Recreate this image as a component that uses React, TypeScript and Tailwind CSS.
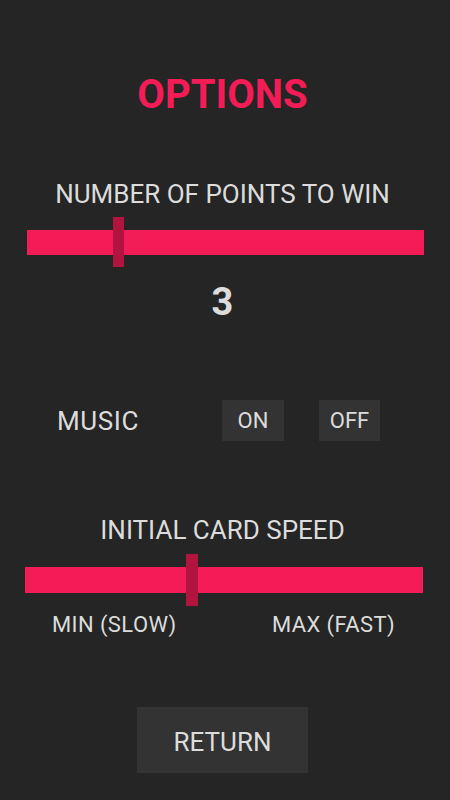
const Slider = ({ left, width, thumb }: { left: number; width: number; thumb: number }) => {
  return (
    <div className="relative h-[50px]" style={{ marginLeft: left, width }}>
      <div className="absolute left-0 right-0 top-[13px] h-[25px] bg-[#f41c57]" />
      <div className="absolute top-0 h-[50px] w-[11px] bg-[#b0143f]" style={{ left: thumb }} />
    </div>
  );
};

export default function App() {
  return (
    <div
      className="w-[450px] h-[800px] bg-[#252525] text-[#dcdcdc] flex flex-col overflow-hidden"
      style={{ fontFamily: "Roboto, 'Liberation Sans', sans-serif" }}
    >
      {/* title */}
      <h1 className="mt-[75px] w-[445px] text-center text-[40px] leading-none font-bold text-[#f41c57]">
        OPTIONS
      </h1>

      {/* points to win */}
      <p className="mt-[66px] w-[445px] text-center text-[26px] leading-none">NUMBER OF POINTS TO WIN</p>
      <div className="mt-[10px]">
        <Slider left={27} width={397} thumb={86} />
      </div>
      <p className="mt-[16px] w-[445px] text-center text-[38px] leading-none font-bold">3</p>

      {/* music */}
      <div className="mt-[79px] flex items-center h-[41px]">
        <span className="ml-[57px] w-[165px] text-[26px] leading-none tracking-[0.6px]">MUSIC</span>
        <button className="w-[62px] h-[41px] bg-[#333333] text-[22px] leading-none">ON</button>
        <button className="ml-[35px] w-[61px] h-[41px] bg-[#333333] text-[22px] leading-none">OFF</button>
      </div>

      {/* card speed */}
      <p className="mt-[76px] w-[445px] text-center text-[26px] leading-none">INITIAL CARD SPEED</p>
      <div className="mt-[11px]">
        <div className="relative h-[52px] ml-[25px] w-[398px]">
          <div className="absolute left-0 right-0 top-[13px] h-[26px] bg-[#f41c57]" />
          <div className="absolute top-0 left-[161px] h-[52px] w-[12px] bg-[#b0143f]" />
        </div>
      </div>
      <div className="mt-[8px] flex text-[22px] leading-none tracking-[0.4px]">
        <span className="ml-[52px]">MIN (SLOW)</span>
        <span className="ml-auto mr-[55px]">MAX (FAST)</span>
      </div>

      {/* return */}
      <button className="mt-[71px] ml-[137px] w-[171px] h-[66px] pt-[4px] bg-[#333333] text-[26px] leading-none">
        RETURN
      </button>
    </div>
  );
}
